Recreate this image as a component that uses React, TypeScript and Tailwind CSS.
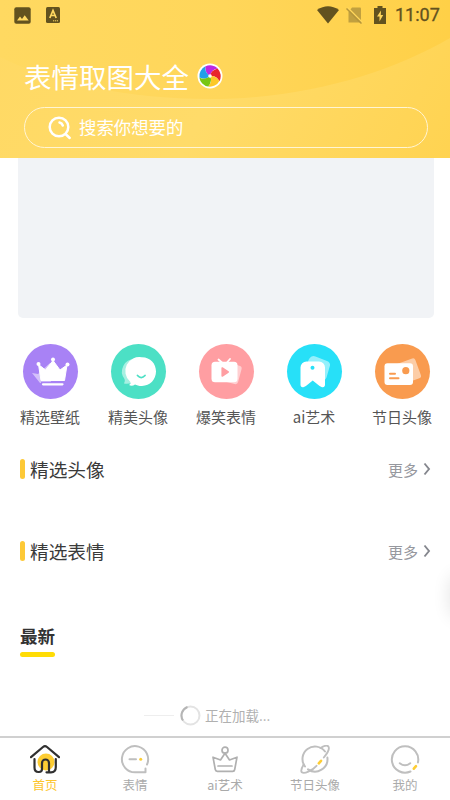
import type { ReactNode } from "react";

interface Item {
  label: string;
  color?: string;
  icon: ReactNode;
}

const categories: Item[] = [
  {
    label: "精选壁纸",
    color: "bg-[#a882f5]",
    icon: (
      <>
        <path d="M9 29l6 1 12-11 1 20H17z" fill="#fff" opacity=".5" />
        <path d="M15.5 20.500L22.500 26 30 16.500 37 26l7-5-2.500 15.500H18z" fill="#fff" stroke="#fff" strokeLinejoin="round" />
        <circle cx="15.500" cy="20" r="2" fill="#fff" />
        <circle cx="30" cy="15.500" r="2" fill="#fff" />
        <circle cx="44.500" cy="20.500" r="2" fill="#fff" />
        <path d="M20 40.300h19.500" stroke="#fff" strokeWidth="2.200" strokeLinecap="round" />
        <path d="M18 38.300h24" stroke="#a882f5" strokeWidth="1.200" />
      </>
    ),
  },
  {
    label: "精美头像",
    color: "bg-[#4ce0c5]",
    icon: (
      <>
        <path d="M24 15a12.500 12.500 0 0 0-10.500 20q1 2-.5 4.500c5 1 9-1 14-3z" fill="#fff" opacity=".5" />
        <path d="M31 13.300c8.500 0 14 6.500 14 14.300S39 42 31 42c-3.500 0-5-.7-7-1.500-2 1.400-4 1.500-6 .5 1.800-1 2-2 1-3.500A14 14 0 0 1 31 13.300z" fill="#fff" />
        <path d="M26.500 31.500q3.700 4.200 7.500 0" fill="none" stroke="#4ce0c5" strokeWidth="1.800" strokeLinecap="round" />
      </>
    ),
  },
  {
    label: "爆笑表情",
    color: "bg-[#ff9ea2]",
    icon: (
      <>
        <rect x="26" y="20" width="15" height="19" rx="3" transform="rotate(15 33 30)" fill="#fff" opacity=".5" />
        <rect x="12.500" y="17.800" width="26" height="20.500" rx="3.500" fill="#fff" />
        <path d="M19.500 15.500l4 3.500M31 15l-3.500 4" stroke="#fff" strokeWidth="1.800" strokeLinecap="round" />
        <path d="M23.200 24v8l6-4z" fill="#ff9ea2" stroke="#ff9ea2" strokeWidth="1.600" strokeLinejoin="round" />
      </>
    ),
  },
  {
    label: "ai艺术",
    color: "bg-[#27e0f8]",
    icon: (
      <>
        <path d="M24.500 12.500q2-1 4 0l11.500 4.500q3.500 1.500 3 4.500l-3.500 12q-1 3-4 2L19 25l2.500-9q1-2.500 3-3.500z" fill="#fff" opacity=".5" />
        <path d="M19 17.500h13a6 6 0 0 1 6 6v17c0 2.500-1.500 3.300-3.500 2.500q-2-.8-3.500-2.200l-5.300-4.300-5.200 4.300q-1.500 1.400-3.500 2.200c-2 .8-3.500 0-3.500-2.500v-17a6 6 0 0 1 6-6z" fill="#fff" />
        <circle cx="25.500" cy="23.700" r="2" fill="#27e0f8" />
      </>
    ),
  },
  {
    label: "节日头像",
    color: "bg-[#f99b4f]",
    icon: (
      <>
        <rect x="20" y="17" width="24" height="21" rx="2.500" transform="rotate(-20 32 28)" fill="#fff" opacity=".5" />
        <rect x="9.500" y="19.200" width="28.500" height="21.800" rx="3" fill="#fff" />
        <circle cx="30.800" cy="26.700" r="3.600" fill="#f99b4f" />
        <path d="M15 29.700h5M15 34.300h8.500" stroke="#f99b4f" strokeWidth="2" strokeLinecap="round" />
      </>
    ),
  },
];

const tabs: Item[] = [
  {
    label: "首页",
    icon: (
      <>
        <circle cx="16" cy="17" r="8.500" fill="#fdcd34" />
        <g stroke="#303030" strokeWidth="2.200">
          <path d="M1 12.200L13 2q2-1.600 4 0l12 10.200" />
          <path d="M4.500 14v8.500q0 4.500 4 4.500h.5q3 0 3-3v-6a3.500 3.500 0 0 1 7 0v8.500" />
          <path d="M16.500 27.300h4.500q4.800 0 4.800-5V14" />
        </g>
      </>
    ),
  },
  {
    label: "表情",
    icon: (
      <>
        <path d="M27 19.500A13.100 13.100 0 1 0 15 27.300h10.500V23.500" stroke="#bfbfbf" strokeWidth="2" />
        <path d="M9.500 14.300h6.500" stroke="#bfbfbf" strokeWidth="2" />
        <circle cx="20.700" cy="14.300" r="1.500" fill="#fdcd34" />
      </>
    ),
  },
  {
    label: "ai艺术",
    icon: (
      <g stroke="#b0b0b0" strokeWidth="1.700">
        <circle cx="15" cy="5.200" r="3" />
        <path d="M15 8.200L10.500 15 3 12.200 5.300 24.500q.3 1.800 2 1.800h15.400q1.700 0 2-1.800L27 12.200 19.500 15z" />
        <path d="M8 21h14" />
      </g>
    ),
  },
  {
    label: "节日头像",
    icon: (
      <>
        <path d="M25 6.500A12.500 12.500 0 0 0 5 21.500M8 24.400A12.500 12.500 0 0 0 27.400 12.600" stroke="#bfbfbf" strokeWidth="2" />
        <path d="M20.500 3q5.800-3.500 7.600-1.800c1.800 1.800-.3 6.500-4.300 11.300M3.700 19.500C1 24 .5 26 1.800 27.300c2.400 2 10.200-1.500 14.700-6.500" stroke="#bfbfbf" strokeWidth="1.900" />
        <path d="M18.800 18.300l2.200-2.500" stroke="#fdcd34" strokeWidth="2.600" />
      </>
    ),
  },
  {
    label: "我的",
    icon: (
      <>
        <path d="M20.500 26.500A13.200 13.200 0 1 1 27.900 17.500" stroke="#bfbfbf" strokeWidth="2" />
        <path d="M9.800 18.200q5.200 4.200 10.400 0" stroke="#bfbfbf" strokeWidth="2" />
        <path d="M23.800 23.700l2.200-2.500" stroke="#fdcd34" strokeWidth="2.600" />
      </>
    ),
  },
];

const blades = [
  { color: "#bd27e3", angle: 0 },
  { color: "#e8242c", angle: 72 },
  { color: "#fcc829", angle: 144 },
  { color: "#7ac614", angle: 216 },
  { color: "#229fe9", angle: 288 },
];

function StatusBar() {
  return (
    <div className="flex h-[30px] items-center pl-[14px] pr-[8px] text-[#62521f]">
      <svg className="size-[17px]" viewBox="0 0 17 17">
        <rect x=".3" y=".3" width="16.400" height="16.400" rx="2" fill="currentColor" />
        <path d="M3 13.500l3-4 2 2.500 2.700-3.800 4 5.300z" fill="#ffd961" />
      </svg>
      <svg className="ml-[15px] h-[16px] w-[14px]" viewBox="0 0 14 16">
        <rect width="14" height="16" rx="1.500" fill="currentColor" />
        <path d="M3.800 11L7 3.500l3.200 7.500M5 8.500h4" fill="none" stroke="#ffd961" strokeWidth="1.700" />
        <path d="M7 13.800h5" stroke="#ffd961" strokeDasharray="1.200 .7" />
      </svg>
      <svg className="ml-auto h-[18px] w-[22px]" viewBox="0 0 22 18">
        <path d="M0 4Q11-3.500 22 4L11 17.500z" fill="currentColor" />
      </svg>
      <svg className="ml-[7px] h-[17px] w-[17px]" viewBox="0 0 17 17">
        <path d="M6 .5h8q1 0 1 1v14H2.500V5z" fill="#c1a03f" />
        <path d="M1.500.5l15 15" stroke="#ffd65a" strokeWidth="1.500" />
        <path d="M.5 1.500l15 15" stroke="#b5953a" strokeWidth="1.500" />
      </svg>
      <svg className="ml-[11px] h-[18px] w-[12px]" viewBox="0 0 12 18">
        <path d="M3.500 0h5v2H12v16H0V2h3.500z" fill="currentColor" />
        <path d="M7 4.500L3 10.500h2.500V15.500L9.200 9H6.800z" fill="#ffd55a" />
      </svg>
      <span className="ml-[9px] w-[47px] whitespace-nowrap font-['Roboto'] text-[18px] leading-[18px] [-webkit-text-stroke:0.3px_#62521f]">
        11:07
      </span>
    </div>
  );
}

function Header() {
  return (
    <header className="relative h-[158px] overflow-hidden bg-[linear-gradient(120deg,#ffd964_0%,#ffdb69_50%,#ffd351_100%)]">
      <svg className="absolute inset-0 h-full w-full" viewBox="0 0 450 158">
        <defs>
          <linearGradient id="wave" x1="0" y1="0" x2="1" y2="0">
            <stop offset="0" stopColor="#ffd961" />
            <stop offset=".5" stopColor="#ffd65a" />
            <stop offset="1" stopColor="#ffd047" />
          </linearGradient>
        </defs>
        <path d="M0 0h450v38C390 73 305 99 210 99 125 99 50 82 0 57z" fill="url(#wave)" />
      </svg>
      <div className="relative">
        <StatusBar />
        <div className="mt-[28px] flex h-[36px] items-center pl-[24px]">
          <h1 className="-mt-px text-[27.500px] leading-[36px] text-white">表情取图大全</h1>
          <svg className="ml-[8px] size-[26px]" viewBox="0 0 26 26">
            <circle cx="13" cy="13" r="12.500" fill="#fff" />
            {blades.map((b) => (
              <path
                key={b.color}
                d="M13 13Q8 10.500 8.300 3.500A10.700 10.700 0 0 1 20.800 5.600Q14.500 6.500 13 13z"
                fill={b.color}
                transform={`rotate(${b.angle} 13 13)`}
              />
            ))}
            <circle cx="13" cy="13" r="1.800" fill="#fff" />
          </svg>
        </div>
        <div className="ml-[24px] mr-[22px] mt-[13px] flex h-[41px] items-center rounded-full border border-[#fff5d4] pl-[23px] text-white">
          <svg className="size-[24px]" viewBox="0 0 24 24" fill="none" stroke="currentColor" strokeWidth="2.500" strokeLinecap="round">
            <circle cx="11" cy="11" r="9.300" />
            <path d="M11.500 6.500q2.500.5 3.300 3M18 18.500l3.700 3.500" />
          </svg>
          <span className="-mt-px ml-[7px] text-[17.400px] leading-[24px]">搜索你想要的</span>
        </div>
      </div>
    </header>
  );
}

function SectionTitle({ title }: { title: string }) {
  return (
    <div className="flex h-[24px] items-center pl-[20px] pr-[18px]">
      <span className="h-[20px] w-[5px] rounded-full bg-[#fdc937]" />
      <h2 className="ml-[5px] text-[18.700px] leading-[24px] text-[#3a3a3a]">{title}</h2>
      <span className="ml-auto mt-[2px] text-[15px] leading-[20px] text-[#96989e]">更多</span>
      <svg className="ml-[4px] h-[14px] w-[10px]" viewBox="0 0 10 14" fill="none" stroke="#85878e" strokeWidth="1.900">
        <path d="M2.500 1.500L7 7l-4.500 5.500" />
      </svg>
    </div>
  );
}

export default function App() {
  return (
    <div className="relative flex h-[800px] w-[450px] flex-col overflow-hidden bg-white font-['Noto_Sans_CJK_SC',sans-serif]">
      <Header />
      <div className="ml-[17.500px] mr-[16px] h-[160px] shrink-0 rounded-b-[5px] bg-[#f1f3f6]" />

      <div className="mt-[26px] grid shrink-0 grid-cols-5 pl-[6px] pr-[4px]">
        {categories.map((item) => (
          <div key={item.label} className="flex flex-col items-center">
            <svg className={`size-[55px] rounded-full ${item.color}`} viewBox="0 0 55 55">
              {item.icon}
            </svg>
            <span className="mt-[8px] text-[15px] leading-[20px] text-[#555]">{item.label}</span>
          </div>
        ))}
      </div>

      <div className="mt-[30px] flex flex-col gap-[58px]">
        <SectionTitle title="精选头像" />
        <SectionTitle title="精选表情" />
      </div>

      <div className="ml-[20px] mt-[61px] w-[35px]">
        <h2 className="text-[17.500px] font-bold leading-[24px] text-[#333]">最新</h2>
        <div className="mt-[4px] h-[5px] rounded-full bg-[#ffdc05]" />
      </div>

      <div className="mt-[48px] flex h-[20px] items-center pl-[144px]">
        <span className="h-px w-[30px] bg-[#eee]" />
        <svg className="ml-[6px] size-[21px]" viewBox="0 0 21 21" fill="none" strokeWidth="2">
          <circle cx="10.500" cy="10.500" r="9" stroke="#e3e3e3" />
          <path d="M3 15.500A9 9 0 0 1 7.500 2" stroke="#b5b5b5" />
        </svg>
        <span className="ml-[4px] text-[13.500px] leading-[20px] text-[#b0b0b0]">正在加载...</span>
      </div>

      <nav className="mt-auto grid h-[64px] shrink-0 grid-cols-5 border-t-2 border-[#d0d0d0] bg-white">
        {tabs.map((tab, i) => (
          <div key={tab.label} className="flex flex-col items-center pt-[7px]">
            <svg className="size-[30px]" viewBox="0 0 30 30" fill="none" strokeLinecap="round" strokeLinejoin="round">
              {tab.icon}
            </svg>
            <span className={`mt-px text-[12.500px] leading-[18px] ${i === 0 ? "text-[#fdc52c]" : "text-[#aaa]"}`}>
              {tab.label}
            </span>
          </div>
        ))}
      </nav>

      {/* edge shadow of the floating button tucked off-screen */}
      <div className="absolute left-[452px] top-[576px] h-[40px] w-[20px] rounded-full shadow-[0_0_18px_2px_rgba(0,0,0,0.11)]" />
    </div>
  );
}
